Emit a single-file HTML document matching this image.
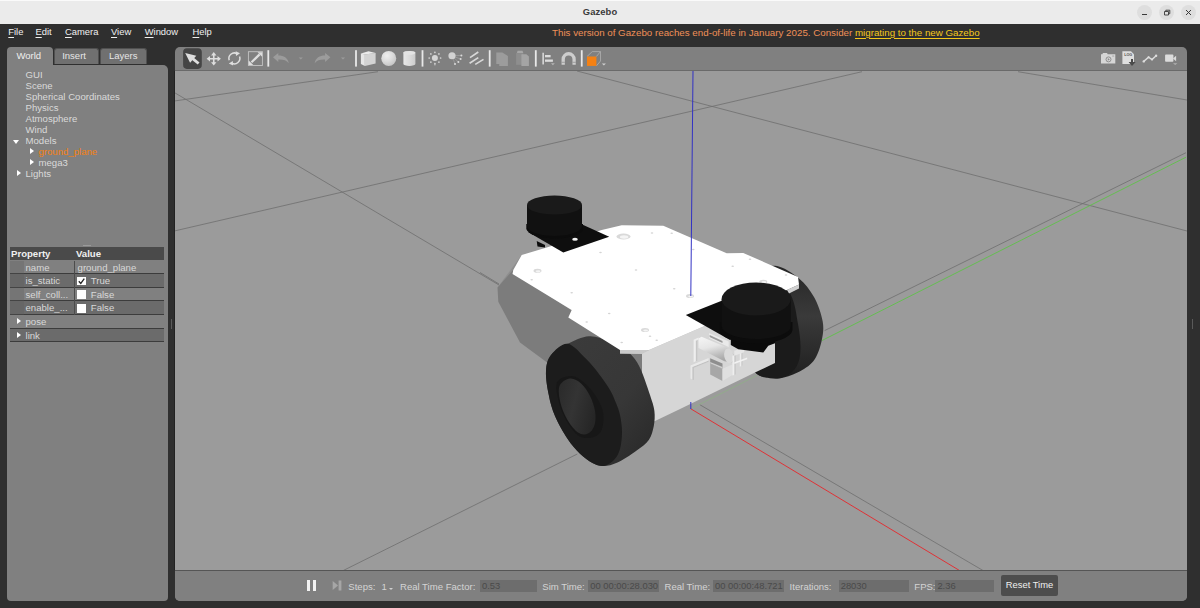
<!DOCTYPE html>
<html><head><meta charset="utf-8"><title>Gazebo</title>
<style>

html,body{margin:0;padding:0}
body{width:1200px;height:608px;overflow:hidden;background:#2f2f2f;position:relative;font-family:"Liberation Sans",sans-serif;font-size:9.5px;color:#dcdcdc}
.a{position:absolute;white-space:nowrap}
#title{left:0;top:0;width:1200px;height:24px;background:#ebebeb;border-top:1px solid #fafafa;box-sizing:border-box}
#title b{position:absolute;left:0;width:1200px;text-align:center;top:4.8px;font-size:9.4px;color:#3a3a3a;letter-spacing:0.1px}
.wb{position:absolute;top:3.5px;width:15px;height:15px;border-radius:50%;background:#dedede}
.menu{top:26px;font-size:9.4px;color:#f0f0f0;line-height:12px}
.menu u{text-decoration:underline;text-underline-offset:1.5px}
#notice{left:552px;top:26.5px;font-size:9.76px;color:#ef9058;line-height:12px}
#notice a{color:#f3c81a;text-decoration:underline;text-underline-offset:1.5px}
#left{left:7px;top:64.5px;width:161px;height:536.5px;background:#808080;border-radius:0 5px 4px 4px}
.tab{top:47.7px;height:16.3px;background:#707070;border:1px solid #505050;border-bottom:none;box-sizing:border-box;border-radius:3px 3px 0 0;text-align:center;line-height:14.5px;color:#e6e6e6}
#tabw{left:7px;top:47px;width:46px;height:18px;background:#808080;border-radius:4px 4px 0 0;text-align:center;line-height:17px;color:#efefef}
.tree{left:25.5px;line-height:11px;color:#dadada;font-size:9.6px}
.tri{position:absolute;width:0;height:0}
.tr{border-left:4px solid #fff;border-top:3.5px solid transparent;border-bottom:3.5px solid transparent}
.td{border-top:4px solid #fff;border-left:3.5px solid transparent;border-right:3.5px solid transparent}
#vp{left:175px;top:47px;width:1012px;height:554px;background:#808080;border-radius:5px}
.prow{left:10.4px;width:153.6px;height:13.7px;box-sizing:border-box;border-bottom:1px solid #3c3c3c}
.pt{font-size:9.6px;color:#d8d8d8;line-height:12px}
.cb{left:77.2px;width:9px;height:8.5px;background:#fff}
.sb{top:580px;height:12px;background:#6d6d6d;color:#4a4a4a;line-height:12px;font-size:9.4px;box-sizing:border-box;padding-left:2px}
.sl{top:580.7px;line-height:12px;font-size:9.55px;color:#d4d4d4}

</style></head>
<body>

<div id="title" class="a"><b>Gazebo</b>
<div class="wb" style="left:1136.7px"><svg width="15" height="15" viewBox="0 0 15 15"><path d="M5 9.5H10" stroke="#3a3a3a" stroke-width="1" fill="none"/></svg></div>
<div class="wb" style="left:1158.7px"><svg width="15" height="15" viewBox="0 0 15 15"><path d="M5.5 6.5H9.5V10H5.5Z M6.8 6.5V5.2H10.8V8.7H9.5" stroke="#3a3a3a" stroke-width="0.9" fill="none"/></svg></div>
<div class="wb" style="left:1180.5px"><svg width="15" height="15" viewBox="0 0 15 15"><path d="M5 5L10 10M10 5L5 10" stroke="#3a3a3a" stroke-width="1" fill="none"/></svg></div>
</div>
<div class="a menu" style="left:8.3px"><u>F</u>ile</div>
<div class="a menu" style="left:35.5px"><u>E</u>dit</div>
<div class="a menu" style="left:65px"><u>C</u>amera</div>
<div class="a menu" style="left:111px"><u>V</u>iew</div>
<div class="a menu" style="left:144.7px"><u>W</u>indow</div>
<div class="a menu" style="left:192.5px"><u>H</u>elp</div>
<div id="notice" class="a">This version of Gazebo reaches end-of-life in January 2025. Consider <a>migrating to the new Gazebo</a></div>

<div id="tabw" class="a" style="text-align:left;padding-left:9.5px;box-sizing:border-box">World</div>
<div class="a tab" style="left:54px;width:44.5px;text-align:left;padding-left:7.2px">Insert</div>
<div class="a tab" style="left:100px;width:46.5px">Layers</div>
<div id="left" class="a"></div>
<div class="a tree" style="top:68.5px">GUI<br>Scene<br>Spherical Coordinates<br>Physics<br>Atmosphere<br>Wind<br>Models</div>
<div class="a tree" style="top:145.5px;left:38.5px"><span style="color:#f58113">ground_plane</span><br>mega3</div>
<div class="a tree" style="top:167.5px">Lights</div>
<div class="tri td" style="left:13px;top:139.5px"></div>
<div class="tri tr" style="left:30px;top:147.5px"></div>
<div class="tri tr" style="left:30px;top:158.5px"></div>
<div class="tri tr" style="left:17px;top:169.5px"></div>

<div class="a" style="left:83px;top:245px;width:8px;height:1px;background:#9a9a9a"></div>
<div class="a" style="left:10.4px;top:247.3px;width:153.6px;height:13.2px;background:#4a4a4a"></div>
<div class="a pt" style="left:11px;top:248px;font-weight:bold;color:#f0f0f0">Property</div>
<div class="a pt" style="left:76px;top:248px;font-weight:bold;color:#f0f0f0">Value</div>

<div class="a prow" style="top:260.5px;background:#808080"></div>
<div class="a prow" style="top:274.1px;background:#6b6b6b"></div>
<div class="a prow" style="top:287.8px;background:#808080"></div>
<div class="a prow" style="top:301.4px;background:#6b6b6b"></div>
<div class="a prow" style="top:315px;background:#808080"></div>
<div class="a prow" style="top:328.6px;background:#6b6b6b"></div>
<div class="a" style="left:10.4px;top:260.5px;width:13.3px;height:54px;background:rgba(90,90,90,0.28)"></div>
<div class="a" style="left:74px;top:260.5px;width:1px;height:54.5px;background:#4c4c4c"></div>
<div class="a pt" style="left:25.5px;top:261.5px">name</div>
<div class="a pt" style="left:77.6px;top:261.5px">ground_plane</div>
<div class="a pt" style="left:25.5px;top:275.2px">is_static</div>
<div class="a cb" style="top:276.8px"><svg width="9" height="8.5" viewBox="0 0 9 8.5" style="display:block"><path d="M1.8 4.2L3.8 6.5L7.3 1.6" stroke="#222" stroke-width="1.3" fill="none"/></svg></div>
<div class="a pt" style="left:90.8px;top:275.2px">True</div>
<div class="a pt" style="left:25.5px;top:288.8px">self_coll...</div>
<div class="a cb" style="top:290.4px"></div>
<div class="a pt" style="left:90.8px;top:288.8px">False</div>
<div class="a pt" style="left:25.5px;top:302.4px">enable_...</div>
<div class="a cb" style="top:304px"></div>
<div class="a pt" style="left:90.8px;top:302.4px">False</div>
<div class="tri tr" style="left:17px;top:318px"></div>
<div class="a pt" style="left:25.5px;top:316px">pose</div>
<div class="tri tr" style="left:17px;top:331.6px"></div>
<div class="a pt" style="left:25.5px;top:329.6px">link</div>

<div class="a" style="left:171px;top:319px;width:1px;height:10px;background:#5a5a5a"></div>
<div class="a" style="left:1191.5px;top:319px;width:1px;height:10px;background:#5a5a5a"></div>

<div id="vp" class="a"></div>
<div class="a" style="left:174px;top:71px;width:1px;height:499px;background:#222"></div>
<div class="a" style="left:175px;top:70px;width:1012px;height:1px;background:#6a6a6a"></div>

<svg style="position:absolute;left:175px;top:71px" width="1012" height="500" viewBox="175 71 1012 500">
<defs>
<linearGradient id="rwt" x1="0" y1="0" x2="0" y2="1"><stop offset="0" stop-color="#262626"/><stop offset="0.45" stop-color="#3a3a3a"/><stop offset="1" stop-color="#1f1f1f"/></linearGradient>
<linearGradient id="flt" x1="0" y1="0" x2="1" y2="1"><stop offset="0" stop-color="#3c3c3c"/><stop offset="0.6" stop-color="#373737"/><stop offset="1" stop-color="#272727"/></linearGradient>
<linearGradient id="cyl" x1="0" y1="0" x2="0.35" y2="1"><stop offset="0" stop-color="#f6f6f6"/><stop offset="0.45" stop-color="#e6e6e6"/><stop offset="0.8" stop-color="#bcbcbc"/><stop offset="1" stop-color="#a8a8a8"/></linearGradient>
<linearGradient id="capg" x1="0" y1="0.2" x2="1" y2="0.6"><stop offset="0" stop-color="#2b2b2b"/><stop offset="0.45" stop-color="#343434"/><stop offset="1" stop-color="#262626"/></linearGradient>
</defs>
<rect x="175" y="71" width="1012" height="500" fill="#9b9b9b"/>
<line x1="174.3" y1="231" x2="862" y2="71.7" stroke="#6f6f6f" stroke-width="0.8"/>
<line x1="174.3" y1="101" x2="378" y2="71.7" stroke="#6f6f6f" stroke-width="0.8"/>
<line x1="174.3" y1="92.5" x2="499" y2="285" stroke="#6f6f6f" stroke-width="0.8"/>
<line x1="577" y1="71" x2="1187" y2="231" stroke="#6f6f6f" stroke-width="0.8"/>
<line x1="1018" y1="71.7" x2="1187" y2="100" stroke="#6f6f6f" stroke-width="0.8"/>
<line x1="1186" y1="152.7" x2="824.6" y2="330.6" stroke="#6f6f6f" stroke-width="0.8"/>
<line x1="343.3" y1="570.5" x2="577.3" y2="454" stroke="#6f6f6f" stroke-width="0.8"/>
<line x1="699.5" y1="404.5" x2="983" y2="570.5" stroke="#6f6f6f" stroke-width="0.8"/>
<line x1="480" y1="272.5" x2="499" y2="284" stroke="#6f6f6f" stroke-width="0.8"/>
<line x1="1186" y1="157.2" x2="822" y2="340.5" stroke="#5cc444" stroke-width="0.85"/>
<line x1="757" y1="375.4" x2="690.8" y2="408.8" stroke="#8fae86" stroke-width="0.8"/>
<line x1="690.8" y1="408.8" x2="959.5" y2="570.5" stroke="#e8262a" stroke-width="0.9"/>
<path d="M777.0 266.0 C783.5 267.1 792.8 273.2 799.0 278.4 C805.2 283.6 810.0 289.8 814.0 297.0 C818.0 304.2 821.5 314.2 822.7 321.6 C824.0 329.0 823.0 334.8 821.5 341.4 C820.0 348.0 817.5 355.8 813.5 361.0 C809.5 366.2 803.2 369.6 797.5 372.5 C791.8 375.4 785.0 377.6 779.5 378.4 C774.0 379.1 768.8 378.1 764.7 377.0 C760.6 375.9 758.1 375.7 754.8 372.0 C751.5 368.3 746.6 367.0 745.0 355.0 C743.4 343.0 742.5 313.8 745.0 300.0 C747.5 286.2 754.7 277.7 760.0 272.0 C765.3 266.3 770.5 264.9 777.0 266.0Z" fill="url(#rwt)"/>
<path d="M770.0 270.0 C777.6 269.1 785.9 285.4 790.6 294.4 C795.3 303.4 796.4 314.9 798.0 324.0 C799.6 333.1 800.7 341.8 800.5 348.8 C800.3 355.8 799.4 361.4 796.8 366.0 C794.2 370.6 790.1 374.6 785.0 376.5 C779.9 378.4 771.0 378.2 766.0 377.5 C761.0 376.8 758.3 375.8 754.8 372.0 C751.3 368.2 746.6 367.0 745.0 355.0 C743.4 343.0 740.8 314.2 745.0 300.0 C749.2 285.8 762.4 270.9 770.0 270.0Z" fill="#1b1b1b"/>
<polygon points="521.7,255.0 513.0,272.0 497.5,287.5" fill="#8e8e8e"/>
<polygon points="513.0,270.0 497.5,287.5 498.3,301.7 520.0,342.5 560.0,372.0 642.0,372.0 642.0,350.0 571.0,310.0 513.0,272.0" fill="#7c7c7c"/>
<polygon points="642.0,353.0 649.0,350.0 700.0,328.0 775.0,296.0 775.0,363.0 755.0,372.5 678.0,410.0 655.0,421.0 642.0,425.0" fill="#d6d6d6"/>
<g>
<polygon points="709.0,332.9 728.7,341.6 728.7,346.9 709.0,337.9" fill="#e9e9e9"/>
<polygon points="709.6,335.0 722.5,341.0 722.5,342.9 709.6,336.9" fill="#9c9c9c"/>
<polygon points="695.8,340.7 697.3,340.1 697.3,360.7 695.8,361.3" fill="#c6c6c6"/>
<polygon points="693.6,339.7 698.5,337.6 698.5,339.5 695.8,340.7 695.8,361.3 693.6,362.2" fill="#eeeeee"/>
<polygon points="692.3,367.1 708.6,360.4 708.6,361.7 693.8,367.8 693.8,379.9 692.3,379.4" fill="#c2c2c2"/>
<polygon points="690.5,365.4 708.6,358.0 708.6,360.4 692.3,367.1 692.3,379.4 690.5,378.6" fill="#e9e9e9"/>
<polygon points="710.2,358.2 722.5,363.4 722.5,368.7 710.2,363.4" fill="#8e8e8e"/>
<polygon points="710.2,361.9 722.5,367.1 722.5,368.7 710.2,363.4" fill="#cfcfcf"/>
<polygon points="710.2,363.4 722.5,368.7 722.5,381.0 710.2,374.5" fill="#a7a7a7"/>
<polygon points="722.5,368.7 732.4,364.4 732.4,374.9 722.5,381.0" fill="#e0e0e0"/>
<polygon points="698.5,338.5 701.6,336.8 729.3,348.6 734.3,355.8 732.4,362.5 724.4,361.3 698.5,347.9" fill="url(#cyl)"/>
<ellipse cx="728.8" cy="355.8" rx="4.6" ry="7.5" fill="#dadada" transform="rotate(-10 728.8 355.8)"/>
<polygon points="734.3,355.8 735.7,355.1 735.7,374.3 734.3,374.9" fill="#c4c4c4"/>
<polygon points="732.4,355.8 734.3,354.9 734.3,374.9 732.4,375.5" fill="#eeeeee"/>
<polygon points="741.3,351.4 742.4,350.9 742.4,365.6 741.3,366.1" fill="#c4c4c4"/>
<polygon points="739.8,351.8 741.3,351.2 741.3,366.1 739.8,366.7" fill="#eeeeee"/>
<polygon points="734.3,362.3 747.2,357.4 747.2,359.2 734.3,364.1" fill="#f2f2f2"/>
<polygon points="734.3,350.8 744.1,347.7 744.1,352.3 734.3,355.8" fill="#e6e6e6"/>
</g>
<path d="M588.8 336.2 C595.5 335.7 602.1 338.5 608.0 340.5 C613.9 342.5 619.7 345.6 624.0 348.5 C628.3 351.4 631.2 354.4 634.0 358.0 C636.8 361.6 638.3 363.8 641.0 370.0 C643.7 376.2 647.8 388.2 650.0 395.0 C652.2 401.8 653.8 405.8 654.4 411.0 C655.0 416.2 654.7 421.2 653.8 426.0 C652.8 430.8 651.7 435.8 648.8 440.0 C645.8 444.2 641.2 447.2 636.0 451.0 C630.8 454.8 622.9 460.0 617.5 462.5 C612.1 465.0 607.9 465.9 603.8 466.0 C599.6 466.1 596.5 465.0 592.5 463.0 C588.5 461.0 584.2 457.8 580.0 453.8 C575.8 449.7 571.7 445.0 567.5 438.8 C563.3 432.5 558.1 423.3 555.0 416.0 C551.9 408.7 550.2 402.5 548.8 395.0 C547.2 387.5 545.6 377.7 546.0 371.0 C546.4 364.3 547.4 359.5 551.0 355.0 C554.6 350.5 561.2 346.9 567.5 343.8 C573.8 340.6 582.0 336.8 588.8 336.2Z" fill="url(#flt)"/>
<path d="M567.5 343.8 C573.3 344.4 580.8 353.8 586.0 358.8 C591.2 363.8 594.8 368.5 598.8 373.8 C602.8 379.0 607.1 385.1 610.0 390.0 C612.9 394.9 614.3 398.8 616.0 403.0 C617.7 407.2 619.0 410.2 620.0 415.0 C621.0 419.8 622.0 426.3 622.0 432.0 C622.0 437.7 621.3 444.3 620.0 449.0 C618.7 453.7 616.7 457.2 614.0 460.0 C611.3 462.8 607.3 465.5 603.8 466.0 C600.2 466.5 596.5 465.0 592.5 463.0 C588.5 461.0 584.2 457.8 580.0 453.8 C575.8 449.7 571.7 445.0 567.5 438.8 C563.3 432.5 558.1 423.3 555.0 416.0 C551.9 408.7 550.2 402.5 548.8 395.0 C547.2 387.5 545.6 377.7 546.0 371.0 C546.4 364.3 547.4 359.5 551.0 355.0 C554.6 350.5 561.7 343.1 567.5 343.8Z" fill="#1c1c1c"/>
<path d="M557.0 382.5 C559.0 378.1 566.5 376.0 571.0 376.0 C575.5 376.0 580.0 379.3 584.0 382.5 C588.0 385.7 591.9 390.4 595.0 395.0 C598.1 399.6 601.2 405.2 602.5 410.0 C603.8 414.8 603.6 420.0 603.0 424.0 C602.4 428.0 601.3 431.7 599.0 434.0 C596.7 436.3 592.6 437.8 589.0 438.0 C585.4 438.2 581.3 438.0 577.5 435.0 C573.7 432.0 569.1 425.4 566.0 420.0 C562.9 414.6 560.5 408.8 559.0 402.5 C557.5 396.2 555.0 386.9 557.0 382.5Z" fill="#171717"/>
<path d="M559.5 386.0 C561.1 381.9 566.4 378.9 570.0 378.5 C573.6 378.1 577.7 380.6 581.0 383.5 C584.3 386.4 587.7 391.4 590.0 396.0 C592.3 400.6 594.2 406.2 595.0 411.0 C595.8 415.8 595.7 421.2 594.5 425.0 C593.3 428.8 590.8 432.2 588.0 433.5 C585.2 434.8 581.4 434.8 578.0 432.5 C574.6 430.2 570.4 424.9 567.5 420.0 C564.6 415.1 561.8 408.7 560.5 403.0 C559.2 397.3 557.9 390.1 559.5 386.0Z" fill="url(#capg)"/>
<polygon points="620.0,350.0 649.0,350.0 642.0,354.0 620.0,353.8" fill="#c9c9c9"/>
<polygon points="787.0,290.0 799.0,284.5 799.0,288.5 789.0,293.5" fill="#cfcfcf"/>
<polygon points="521.7,255.0 546.7,247.5 601.7,230.0 621.7,225.3 663.3,225.8 726.7,253.3 743.3,253.0 798.0,277.0 799.0,284.5 787.0,290.0 700.0,328.0 649.0,350.0 620.0,350.0 568.3,317.5 571.7,310.0 512.5,274.0 513.3,270.0" fill="#ffffff"/>
<ellipse cx="623.5" cy="236.5" rx="7" ry="3" fill="#d9d9d9"/><ellipse cx="624.1" cy="237.0" rx="4.2" ry="1.7" fill="#f4f4f4"/>
<ellipse cx="537.5" cy="270.8" rx="4" ry="2" fill="#d9d9d9"/><ellipse cx="538.1" cy="271.3" rx="2.4" ry="1.1" fill="#f4f4f4"/>
<ellipse cx="645" cy="330" rx="4" ry="2" fill="#d9d9d9"/><ellipse cx="645.6" cy="330.5" rx="2.4" ry="1.1" fill="#f4f4f4"/>
<ellipse cx="690" cy="296" rx="4" ry="2" fill="#d9d9d9"/><ellipse cx="690.6" cy="296.5" rx="2.4" ry="1.1" fill="#f4f4f4"/>
<ellipse cx="763.3" cy="281.7" rx="4" ry="2" fill="#d9d9d9"/><ellipse cx="763.9" cy="282.2" rx="2.4" ry="1.1" fill="#f4f4f4"/>
<ellipse cx="652" cy="233" rx="1.3" ry="0.8" fill="#d4d4d4"/>
<ellipse cx="671.7" cy="233.3" rx="1.3" ry="0.8" fill="#d4d4d4"/>
<ellipse cx="531.7" cy="279.7" rx="1.3" ry="0.8" fill="#d4d4d4"/>
<ellipse cx="600.5" cy="252.5" rx="1.3" ry="0.8" fill="#d4d4d4"/>
<ellipse cx="636" cy="270" rx="1.3" ry="0.8" fill="#d4d4d4"/>
<ellipse cx="571.7" cy="292.8" rx="1.3" ry="0.8" fill="#d4d4d4"/>
<ellipse cx="609.2" cy="313.5" rx="1.3" ry="0.8" fill="#d4d4d4"/>
<ellipse cx="586.7" cy="322" rx="1.3" ry="0.8" fill="#d4d4d4"/>
<ellipse cx="674.2" cy="288.7" rx="1.3" ry="0.8" fill="#d4d4d4"/>
<ellipse cx="693.3" cy="249.5" rx="1.3" ry="0.8" fill="#d4d4d4"/>
<ellipse cx="750" cy="259.3" rx="1.3" ry="0.8" fill="#d4d4d4"/>
<ellipse cx="732.7" cy="266.3" rx="1.3" ry="0.8" fill="#d4d4d4"/>
<ellipse cx="786" cy="275" rx="1.3" ry="0.8" fill="#d4d4d4"/>
<ellipse cx="650" cy="336.3" rx="1.3" ry="0.8" fill="#d4d4d4"/>
<ellipse cx="656.7" cy="340.3" rx="1.3" ry="0.8" fill="#d4d4d4"/>
<ellipse cx="621.7" cy="342.5" rx="1.3" ry="0.8" fill="#d4d4d4"/>
<polygon points="536.7,241 545,245 545,247.5 537.5,246.5" fill="#0c0c0c"/>
<polygon points="583.3,225.0 609.2,236.7 563.3,252.5 528.0,232.0" fill="#0e0e0e"/>
<ellipse cx="575" cy="239.2" rx="2.8" ry="1.5" fill="#f2f2f2"/>
<path d="M526.3 224 L526.3 229 A28.7 10.5 0 0 0 583 230 L583 224 Z" fill="#0c0c0c"/>
<path d="M527 205 L527 226 A27.5 10 0 0 0 582 226 L582 205 Z" fill="#111111"/>
<ellipse cx="554.5" cy="205" rx="27.5" ry="9.6" fill="#1a1a1a"/>
<line x1="693" y1="71" x2="690.8" y2="296" stroke="#3232c4" stroke-width="1"/>
<line x1="690.8" y1="402" x2="690.8" y2="409" stroke="#3232c4" stroke-width="1"/>
<polygon points="730.8,338 775,338 775,343.3 768.3,345.8 763.3,352.5 738.3,349.2 730.8,345" fill="#0b0b0b"/>
<polygon points="685.8,315.0 721.7,300.8 775.0,318.0 730.0,340.0" fill="#0e0e0e"/>
<path d="M719.5 322 L719.5 329 A36.5 14 0 0 0 792.5 330 L792.5 322 Z" fill="#0c0c0c"/>
<path d="M721.7 299 L721.7 326 A34.5 13 0 0 0 790.8 326 L790.8 299 Z" fill="#111111"/>
<ellipse cx="756.2" cy="299" rx="34.6" ry="16.5" fill="#1a1a1a"/>
</svg>
<svg style="position:absolute;left:175px;top:47px" width="1012" height="24" viewBox="175 47 1012 24">
<rect x="183.1" y="48.3" width="18.7" height="20.6" rx="3.8" fill="#454545"/>
<path d="M185.2 53.1L196.3 55.8L190.1 62.7Z" fill="#dedede"/><path d="M192.4 58.4L198.6 63.5" stroke="#dedede" stroke-width="2.9"/>
<g fill="#dedede"><path d="M212.95 54.5h1.6v8.5h-1.6z M209.5 57.95h8.5v1.6h-8.5z"/><path d="M213.75 52l2.7 3.4h-5.4z M213.75 65.6l2.7 -3.4h-5.4z M206.6 58.75l3.4 -2.7v5.4z M220.9 58.75l-3.4 -2.7v5.4z"/></g>
<g stroke="#dedede" stroke-width="1.5" fill="none"><path d="M229.2 60.2A5.5 5.5 0 0 1 237 53.6"/><path d="M239.6 56.6A5.5 5.5 0 0 1 231.8 63.2"/></g><path d="M235.7 51.2l4.3 2.1l-4 2.6z M233.1 65.6l-4.3 -2.1l4 -2.6z" fill="#dedede"/>
<rect x="248.4" y="51.7" width="14" height="13.8" fill="none" stroke="#c4c4c4" stroke-width="0.9"/><path d="M251.5 62.3L259.6 54.4" stroke="#dedede" stroke-width="2.2"/><path d="M257.6 52.2h4.5v4.5z M253.2 64.9h-4.5v-4.5z" fill="#dedede"/>
<rect x="267.40000000000003" y="50.2" width="1.8" height="16.4" fill="#e8e8e8"/>
<path d="M273 57.2l5.3 -4.2v2.6c5.5 0 9.5 2.4 10.4 7.6c-2.2 -3 -5.4 -3.9 -10.4 -3.7v2.5z" fill="#9c9c9c"/>
<path d="M298.8 57.6h4l-2 2z" fill="#9c9c9c"/>
<path d="M330.4 57.2l-5.3 -4.2v2.6c-5.5 0 -9.5 2.4 -10.4 7.6c2.2 -3 5.4 -3.9 10.4 -3.7v2.5z" fill="#9c9c9c"/>
<path d="M341 57.6h4l-2 2z" fill="#9c9c9c"/>
<rect x="355.1" y="50.2" width="1.8" height="16.4" fill="#e8e8e8"/>
<polygon points="364.8,54.4 375.6,52.9 375.6,63.6 364.8,65.9" fill="#d3d3d3"/>
<polygon points="360.9,53.4 364.8,54.4 364.8,65.9 360.9,64.0" fill="#e6e6e6"/>
<polygon points="360.9,53.4 368.5,51.3 375.6,52.9 364.8,54.4" fill="#ebebeb"/>
<defs><radialGradient id="sg" cx="0.38" cy="0.32" r="0.75"><stop offset="0" stop-color="#efefef"/><stop offset="0.5" stop-color="#dcdcdc"/><stop offset="1" stop-color="#c2c2c2"/></radialGradient><linearGradient id="cg" x1="0" x2="1"><stop offset="0" stop-color="#e8e8e8"/><stop offset="0.5" stop-color="#dcdcdc"/><stop offset="1" stop-color="#cccccc"/></linearGradient></defs>
<circle cx="388.75" cy="58.4" r="7.5" fill="url(#sg)"/>
<path d="M403.4 52.8V64A6 1.9 0 0 0 415.4 64V52.8A6 1.9 0 0 0 403.4 52.8Z" fill="url(#cg)"/><ellipse cx="409.4" cy="52.8" rx="6" ry="1.9" fill="#e4e4e4"/>
<rect x="421.6" y="50.2" width="1.8" height="16.4" fill="#e8e8e8"/>
<circle cx="434.9" cy="58" r="3" fill="#d6d6d6"/>
<circle cx="440.60" cy="58.00" r="0.85" fill="#d4d4d4"/>
<circle cx="438.93" cy="62.03" r="0.85" fill="#d4d4d4"/>
<circle cx="434.90" cy="63.70" r="0.85" fill="#d4d4d4"/>
<circle cx="430.87" cy="62.03" r="0.85" fill="#d4d4d4"/>
<circle cx="429.20" cy="58.00" r="0.85" fill="#d4d4d4"/>
<circle cx="430.87" cy="53.97" r="0.85" fill="#d4d4d4"/>
<circle cx="434.90" cy="52.30" r="0.85" fill="#d4d4d4"/>
<circle cx="438.93" cy="53.97" r="0.85" fill="#d4d4d4"/>
<path d="M434.9 63.5V65.5" stroke="#c4c4c4" stroke-width="0.9"/>
<g stroke="#a2a2a2" stroke-width="0.7"><path d="M452 55.75L461.4 55.4M452 55.75L460.6 59.1M452 55.75L458.4 62.1M452 55.75L455 64"/></g>
<circle cx="452" cy="55.75" r="3.6" fill="#d2d2d2"/>
<g fill="#dadada"><circle cx="461.4" cy="55.4" r="1"/><circle cx="460.6" cy="59.1" r="1"/><circle cx="458.4" cy="62.1" r="1"/><circle cx="455" cy="64" r="1"/></g>
<g stroke="#d8d8d8" stroke-width="1.7"><path d="M470 57.6L478.3 52M469.6 63.25L478.3 57.6M475.25 64.4L483.5 59.35"/></g>
<rect x="488.8" y="50.2" width="1.8" height="16.4" fill="#e8e8e8"/>
<polygon points="496.3,52.4 502.3,52.4 507.9,56.1 507.9,65.9 499.3,65.9 499.3,64.0 496.3,64.0" fill="#9c9c9c"/>
<polygon points="516.1,53.1 523.3,53.1 523.3,64.8 516.1,64.8" fill="#8e8e8e"/>
<polygon points="517.6,50.7 522.5,50.7 523.3,53.1 516.9,53.1" fill="#a6a6a6"/>
<polygon points="521.4,54.3 526.3,54.3 528.9,56.5 528.9,65.9 521.4,65.9" fill="#a4a4a4"/>
<rect x="534.9" y="50.2" width="1.8" height="16.4" fill="#e8e8e8"/>
<rect x="542.4" y="52.75" width="1.5" height="11.7" fill="#dcdcdc"/><rect x="545" y="55" width="5.6" height="2.3" fill="#dcdcdc"/><rect x="545" y="59.5" width="7.9" height="2.3" fill="#dcdcdc"/><path d="M551 63.3h3.8l-1.9 1.9z" fill="#b4b4b4"/>
<path d="M563.2 64.75V59.2A5.45 5.45 0 0 1 574.1 59.2V64.75" fill="none" stroke="#cdcdcd" stroke-width="3.3"/><path d="M561.55 62.3H564.85M572.45 62.3H575.75" stroke="#8a8a8a" stroke-width="0.7"/>
<rect x="580.85" y="50.2" width="1.8" height="16.4" fill="#e8e8e8"/>
<path d="M587 56.5L592.25 51.6H600.5V61L596.4 65.9M596.4 56.5L600.5 51.6" fill="none" stroke="#b0b0b0" stroke-width="0.8"/><rect x="587" y="56.5" width="9.4" height="9.4" fill="#f58113"/><path d="M601.9 63.5h4l-2 2z" fill="#d0d0d0"/>
<path d="M1101 54.3H1102.3L1103 53H1107L1107.7 54.3H1115.3V63.6H1101Z" fill="#d6d6d6"/><circle cx="1108.5" cy="59.4" r="2.5" fill="none" stroke="#888" stroke-width="0.9"/><path d="M1107.8 58.1L1109.8 59.4L1107.8 60.7Z" fill="#8c8c8c"/><rect x="1112.2" y="55.6" width="2" height="0.9" fill="#a0a0a0"/>
<path d="M1122.4 51.25H1131L1134 54.2V64H1122.4Z" fill="#dedede"/><text x="1124.2" y="56.3" font-family="Liberation Sans, sans-serif" font-size="3.7" font-weight="bold" fill="#505050">LOG</text><path d="M1131 59H1133V62.1H1135.6L1132 65.9L1128.6 62.1H1131Z" fill="#4a4a4a"/>
<path d="M1143.75 61.4L1148.6 57.25L1152 59.5L1156.1 55.75" stroke="#dcdcdc" stroke-width="1.4" fill="none"/><g fill="#dcdcdc"><circle cx="1143.75" cy="61.4" r="1.2"/><circle cx="1148.6" cy="57.25" r="1.1"/><circle cx="1152" cy="59.5" r="1.1"/><circle cx="1156.1" cy="55.75" r="1.2"/></g>
<rect x="1165.1" y="54.6" width="8.3" height="7.2" rx="0.8" fill="#dcdcdc"/><path d="M1173 58.4L1176.1 55.8V61.2Z" fill="#dcdcdc"/><path d="M1173 63.2h4.4l-2.2 1.8z" fill="#b0b0b0"/>
</svg>
<div class="a" style="left:175px;top:570px;width:1012px;height:31px;background:#808080;border-top:1px solid #555;box-sizing:border-box;border-radius:0 0 5px 5px"></div>
<div class="a" style="left:306.7px;top:580px;width:3.2px;height:11px;background:#f2f2f2"></div>
<div class="a" style="left:312.5px;top:580px;width:3.2px;height:11px;background:#f2f2f2"></div>
<svg class="a" style="left:332px;top:580px" width="11" height="11" viewBox="0 0 11 11"><path d="M0.7 1L6 5.5L0.7 10Z" fill="#a6a6a6"/><rect x="6.6" y="0.5" width="2.8" height="10" fill="#a6a6a6"/></svg>
<div class="a sl" style="left:348.3px">Steps:</div>
<div class="a sl" style="left:381.5px">1</div>
<div class="tri" style="left:388.5px;top:587.5px;border-top:2.5px solid #d0d0d0;border-left:2.3px solid transparent;border-right:2.3px solid transparent"></div>
<div class="a sl" style="left:400px">Real Time Factor:</div>
<div class="a sb" style="left:480px;width:57.3px">0.53</div>
<div class="a sl" style="left:542.3px">Sim Time:</div>
<div class="a sb" style="left:588.3px;width:71px">00 00:00:28.030</div>
<div class="a sl" style="left:664.5px">Real Time:</div>
<div class="a sb" style="left:713px;width:70.8px">00 00:00:48.721</div>
<div class="a sl" style="left:789.6px">Iterations:</div>
<div class="a sb" style="left:838.7px;width:70.2px">28030</div>
<div class="a sl" style="left:914.3px">FPS:</div>
<div class="a sb" style="left:935.4px;width:59px">2.36</div>
<div class="a" style="left:1000.7px;top:575px;width:57.6px;height:20.6px;background:#4d4d4d;border-radius:2px;color:#f0f0f0;font-size:9.4px;line-height:20.6px;text-align:center">Reset Time</div>

</body></html>
